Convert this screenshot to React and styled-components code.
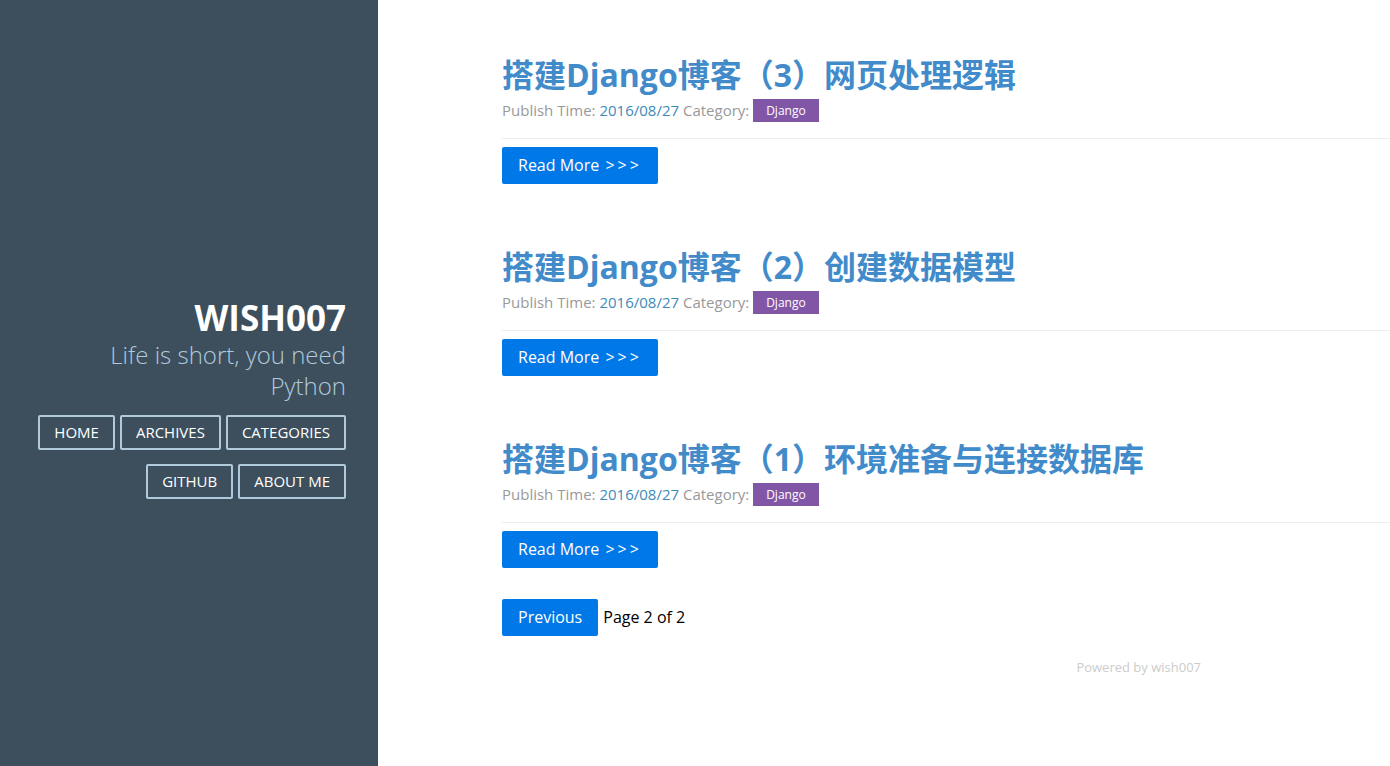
import React from 'react';
import styled, { createGlobalStyle } from 'styled-components';

const FONT = `"Open Sans", "Noto Sans CJK SC", sans-serif`;

const GlobalStyle = createGlobalStyle`
    html, body {
        margin: 0;
        padding: 0;
        background: #fff;
    }
    body {
        font-family: ${FONT};
        color: #000;
    }
`;

const posts = [
    { title: '搭建Django博客（3）网页处理逻辑', date: '2016/08/27', category: 'Django' },
    { title: '搭建Django博客（2）创建数据模型', date: '2016/08/27', category: 'Django' },
    { title: '搭建Django博客（1）环境准备与连接数据库', date: '2016/08/27', category: 'Django' },
];

const navLinks = ['Home', 'Archives', 'Categories', 'Github', 'About me'];

const App = () => {
    return (
        <>
            <GlobalStyle />
            <Layout>
                <Sidebar>
                    <Header>
                        <BrandTitle>WISH007</BrandTitle>
                        <Tagline>Life is short, you need<br />Python</Tagline>
                        <Nav>
                            {navLinks.map((link) => (
                                <NavButton key={link} href="#">{link}</NavButton>
                            ))}
                        </Nav>
                    </Header>
                </Sidebar>
                <Content>
                    {posts.map((post) => (
                        <Post key={post.title}>
                            <PostTitle>{post.title}</PostTitle>
                            <PostMeta>
                                Publish Time: <DateLink href="#">{post.date}</DateLink> Category:{' '}
                                <CategoryTag href="#">{post.category}</CategoryTag>
                            </PostMeta>
                            <Divider />
                            <PrimaryButton href="#">
                                Read More <Arrows>&gt;&gt;&gt;</Arrows>
                            </PrimaryButton>
                        </Post>
                    ))}
                    <Pagination>
                        <PrimaryButton href="#">Previous</PrimaryButton>
                        <PageInfo>Page 2 of 2</PageInfo>
                    </Pagination>
                    <Footer>Powered by wish007</Footer>
                </Content>
            </Layout>
        </>
    );
};

export default App;

const Layout = styled.div`
    display: flex;
    min-height: 100vh;
`;

const Sidebar = styled.aside`
    width: 378px;
    flex-shrink: 0;
    background: #3d4f5d;
    box-sizing: border-box;
    padding: 296px 32px 0;
`;

const Header = styled.div`
    text-align: right;
`;

const BrandTitle = styled.h1`
    margin: 0;
    font-size: 35px;
    line-height: 43px;
    font-weight: 700;
    color: #fff;
`;

const Tagline = styled.h2`
    margin: 0;
    font-size: 24px;
    line-height: 31px;
    font-weight: 300;
    color: #b0cadb;
`;

const Nav = styled.nav`
    display: flex;
    flex-wrap: wrap;
    justify-content: flex-end;
    column-gap: 5px;
    row-gap: 14px;
    margin-top: 14px;
`;

const NavButton = styled.a`
    display: inline-block;
    box-sizing: border-box;
    height: 35px;
    line-height: 31px;
    padding: 0 14px;
    border: 2px solid #b0cadb;
    border-radius: 2px;
    color: #fff;
    font-size: 15px;
    text-transform: uppercase;
    text-decoration: none;
`;

const Content = styled.main`
    flex: 1;
    padding: 55px 0 0 124px;
`;

const Post = styled.article`
    margin-bottom: 63px;
`;

const PostTitle = styled.h1`
    margin: 0;
    font-size: 32px;
    line-height: 40px;
    font-weight: 700;
    color: #428bca;
`;

const PostMeta = styled.p`
    margin: 5px 0 0;
    font-size: 15px;
    line-height: 20px;
    color: #999;
`;

const DateLink = styled.a`
    color: #3b8bba;
    text-decoration: none;
`;

const CategoryTag = styled.a`
    display: inline-block;
    padding: 0 13px;
    line-height: 23px;
    font-size: 12px;
    color: #fff;
    background: #8156a7;
    text-decoration: none;
    vertical-align: middle;
    margin-top: -3px;
`;

const Divider = styled.hr`
    margin: 16px 0 8px;
    border: 0;
    border-top: 1px solid #eee;
    height: 0;
`;

const PrimaryButton = styled.a`
    display: inline-block;
    box-sizing: border-box;
    height: 37px;
    line-height: 37px;
    padding: 0 16px;
    font-size: 16px;
    color: #fff;
    background: #0078e7;
    border-radius: 2px;
    text-decoration: none;
`;

const Arrows = styled.span`
    letter-spacing: 3px;
    margin-left: 2px;
`;

const Pagination = styled.div`
    display: flex;
    align-items: center;
    gap: 5px;
    margin-top: -32px;
`;

const PageInfo = styled.span`
    font-size: 16px;
    color: #000;
`;

const Footer = styled.footer`
    margin-top: 23px;
    padding-right: 189px;
    text-align: right;
    font-size: 13px;
    line-height: 16px;
    color: #ccc;
`;
